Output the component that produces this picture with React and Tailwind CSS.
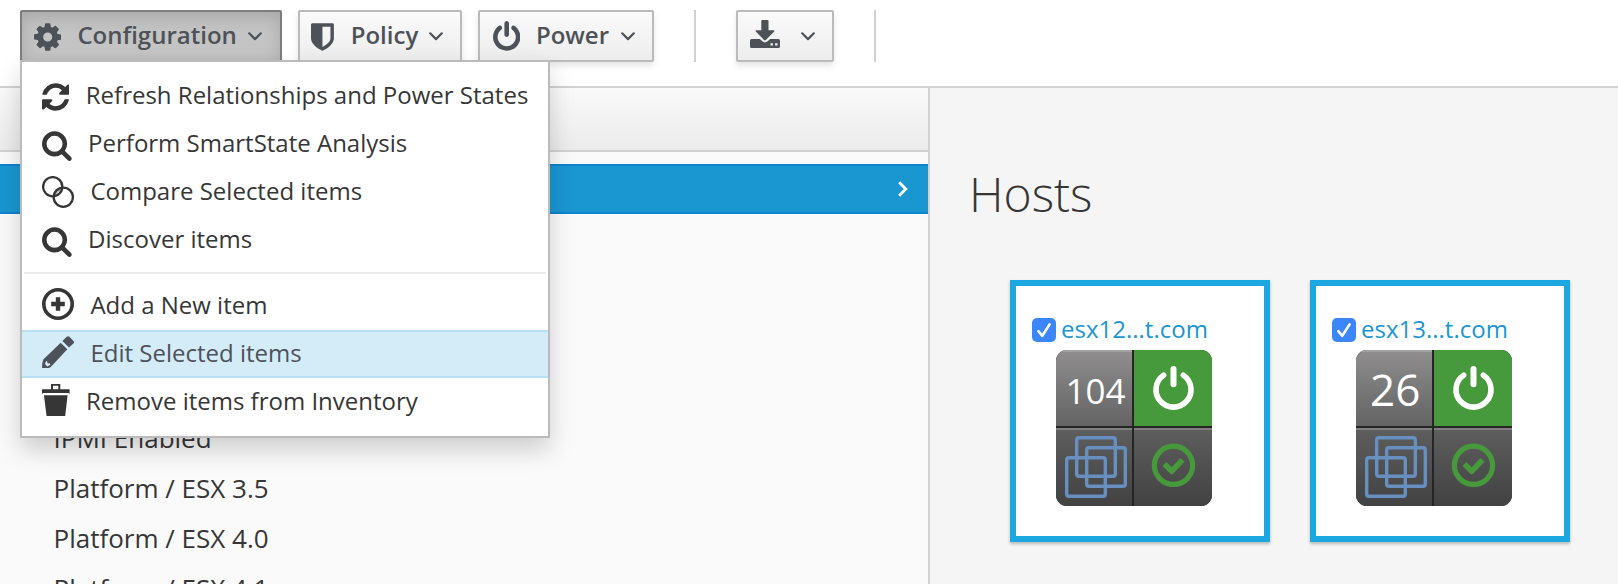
import React from 'react';

const PATHS = {
  cog: 'M1152 896q0-106-75-181t-181-75-181 75-75 181 75 181 181 75 181-75 75-181zm512-109v222q0 12-8 23t-20 13l-185 28q-19 54-39 91 35 50 107 138 10 12 10 25t-9 23q-27 37-99 108t-94 71q-12 0-26-9l-138-108q-44 23-91 38-16 136-29 186-7 28-36 28h-222q-14 0-24.5-8.5t-11.5-21.5l-28-184q-49-16-90-37l-141 107q-10 9-25 9-14 0-25-11-126-114-165-168-7-10-7-23 0-12 8-23 15-21 51-66.5t54-70.5q-27-50-41-99l-183-27q-13-2-21-12.5t-8-23.5v-222q0-12 8-23t19-13l186-28q14-46 39-92-40-57-107-138-10-12-10-24 0-10 9-23 26-36 98.5-107.5t94.5-71.5q13 0 26 10l138 107q44-23 91-38 16-136 29-186 7-28 36-28h222q14 0 24.5 8.5t11.5 21.5l28 184q49 16 90 37l142-107q9-9 24-9 13 0 25 10 129 119 165 170 7 8 7 22 0 12-8 23-15 21-51 66.5t-54 70.5q26 50 41 98l183 28q13 2 21 12.5t8 23.5z',
  shield: 'M1344 960v-640h-448v1137q119-63 213-137 235-184 235-360zm192-768v768q0 86-33.5 170.5t-83 150-118 127.5-126.5 103-121 77.5-89.5 49.5-42.5 20q-12 6-26 6t-26-6q-16-7-42.5-20t-89.5-49.5-121-77.5-126.5-103-118-127.5-83-150-33.5-170.5v-768q0-26 19-45t45-19h1152q26 0 45 19t19 45z',
  power: 'M1664 896q0 156-61 298t-164 245-245 164-298 61-298-61-245-164-164-245-61-298q0-182 80.5-343t226.5-270q43-32 95.5-25t83.5 50q32 42 24.5 94.5t-49.5 84.5q-98 74-151.5 181t-53.5 228q0 104 40.5 198.5t109.5 163.5 163.5 109.5 198.5 40.5 198.5-40.5 163.5-109.5 109.5-163.5 40.5-198.5q0-121-53.5-228t-151.5-181q-42-32-49.5-84.5t24.5-94.5q31-43 84-50t95 25q146 109 226.5 270t80.5 343zm-640-768v640q0 52-38 90t-90 38-90-38-38-90v-640q0-52 38-90t90-38 90 38 38 90z',
  refresh: 'M1639 1056q0 5-1 7-64 268-268 434.5t-478 166.5q-146 0-282.5-55t-243.5-157l-129 129q-19 19-45 19t-45-19-19-45v-448q0-26 19-45t45-19h448q26 0 45 19t19 45-19 45l-137 137q71 66 161 102t187 36q134 0 250-65t186-179q11-17 53-117 8-23 30-23h192q13 0 22.5 9.5t9.5 22.5zm25-800v448q0 26-19 45t-45 19h-448q-26 0-45-19t-19-45 19-45l138-138q-148-137-349-137-134 0-250 65t-186 179q-11 17-53 117-8 23-30 23h-199q-13 0-22.5-9.5t-9.5-22.5v-7q65-268 270-434.5t480-166.5q146 0 284 55.5t245 156.5l130-129q19-19 45-19t45 19 19 45z',
  search: 'M1216 832q0-185-131.5-316.5t-316.5-131.5-316.5 131.5-131.5 316.5 131.5 316.5 316.5 131.5 316.5-131.5 131.5-316.5zm512 832q0 52-38 90t-90 38q-54 0-90-38l-343-342q-179 124-399 124-143 0-273.5-55.5t-225-150-150-225-55.5-273.5 55.5-273.5 150-225 225-150 273.5-55.5 273.5 55.5 225 150 150 225 55.5 273.5q0 220-124 399l343 343q37 37 37 90z',
};

const Cog = () => (
  <svg className="mt-[8.7px] h-8 w-[27.4px] shrink-0" viewBox="128 0 1536 1792" fill="currentColor"><path d={PATHS.cog} /></svg>
);
const Shield = () => (
  <svg className="mt-[8.7px] -ml-[0.7px] h-8 w-[22.9px] shrink-0" viewBox="256 0 1280 1792" fill="currentColor"><path d={PATHS.shield} /></svg>
);
const Power = () => (
  <svg className="mt-[8.7px] ml-[0.5px] h-8 w-[27.4px] shrink-0" viewBox="128 0 1536 1792" fill="currentColor"><path d={PATHS.power} /></svg>
);
const Refresh = () => (
  <svg className="mt-[8.7px] h-8 w-[27.4px] shrink-0" viewBox="128 0 1536 1792" fill="currentColor"><path d={PATHS.refresh} /></svg>
);
const Search = () => (
  <svg className="mt-[8.5px] h-8 w-[29.7px] shrink-0" viewBox="64 0 1664 1792" fill="currentColor"><path d={PATHS.search} /></svg>
);
const Compare = () => (
  <svg className="mt-2 h-8 w-8 shrink-0" viewBox="0 0 32 32" fill="none" stroke="currentColor" strokeWidth="2.3">
    <circle cx="10.7" cy="10.7" r="9.6" />
    <circle cx="21.3" cy="21.2" r="9.6" />
    <path strokeWidth="1" strokeDasharray="1.2 0.6" d="M12.800 18.800L18.800 12.800M13 16.200L16.200 13M15.500 19L19 15.500" />
  </svg>
);
const AddCircle = () => (
  <svg className="mt-1.5 h-8 w-8 shrink-0" viewBox="0 0 32 32" fill="none" stroke="currentColor">
    <circle cx="16" cy="16" r="14.2" strokeWidth="3.6" />
    <path d="M16 9.2v13.6M9.2 16h13.6" strokeWidth="4.4" />
  </svg>
);
const Pencil = () => (
  <svg className="mt-1.5 h-8 w-8 shrink-0" viewBox="0 0 32 32" fill="currentColor">
    <path d="M20.400 5l6.600 6.600 4.400-4q1.200-1.300 0-2.500l-4-4.300q-1.300-1.300-2.600 0z" />
    <path fillRule="evenodd" d="M18.700 6.700L1.300 23.500Q0 26.500 0 32h6.800l2-1L25.300 13.300zM3.700 25.400l1.400-.5.5 2.300 2.400.4.3 1.200-2.900 1.600-2.300-2.200z" />
  </svg>
);
const Trash = () => (
  <svg className="mt-1.5 h-8 w-[27.6px] shrink-0" viewBox="0 0 27.6 32" fill="currentColor">
    <path fillRule="evenodd" d="M9 0h9.3v5.2h9.3v5l-1-1.3H1L0 10.2v-5h9zM11 1.8v3.4h5.3V1.8z" />
    <path d="M2 11.2h23.6L23.2 32H4.6z" />
  </svg>
);
const Download = () => (
  <svg className="mt-2 h-7 w-[30px] shrink-0" viewBox="0 0 30 28" fill="currentColor">
    <path d="M11.3 1q0-1 1-1h5.2q1 0 1 1v9.2h5.2q1.2.2.5 1.2L15.8 20q-.9.8-1.8 0L5.8 11.400q-.7-1 .5-1.200h5z" />
    <path fillRule="evenodd" d="M1.500 19h8.300l2.900 2.600q2.300 1.600 4.600 0l2.900-2.600h8.300q1.500 0 1.500 1.500v6q0 1.500-1.500 1.500h-27Q0 28 0 26.500v-6Q0 19 1.500 19zM20.500 23.200v2.400h2.400v-2.400zM25.100 23.200v2.400h2.400v-2.400z" />
  </svg>
);
const Caret = () => (
  <svg className="mt-5 h-[9px] w-[14px] shrink-0" viewBox="0 0 14 9" fill="none" stroke="currentColor" strokeWidth="2.2" strokeLinecap="round" strokeLinejoin="round">
    <path d="M1.200 1.300L7 7.100l5.800-5.800" />
  </svg>
);

const BTN = 'flex h-[52px] items-start rounded-[2px] border-2 pl-3 text-2xl font-semibold leading-[46px] text-[#4d5258]';
const NORMAL = 'border-[#bbbbbb] bg-linear-to-b from-[#fafafa] to-[#ededed] shadow-[0_4px_6px_rgba(3,3,3,0.1)]';

function MenuItem({ icon, children, active }) {
  return (
    <li
      className={
        'flex h-12 items-start gap-[16.4px] pl-5 text-2xl leading-[46px] whitespace-nowrap ' +
        (active
          ? 'bg-[#d4ebf8] text-[#4d5258] shadow-[inset_0_2px_0_#b9dff2,inset_0_-2px_0_#b9dff2]'
          : 'text-[#363636]')
      }
    >
      {icon}
      <span>{children}</span>
    </li>
  );
}

function Menu() {
  return (
    <ul className="absolute top-[50px] left-0 z-10 h-[378px] w-[530px] rounded-[1px] border-2 border-[#bbbbbb] bg-white py-2.5 shadow-[0_12px_24px_rgba(0,0,0,0.175)]">
      <MenuItem icon={<Refresh />}>Refresh Relationships and Power States</MenuItem>
      <MenuItem icon={<Search />}>Perform SmartState Analysis</MenuItem>
      <MenuItem icon={<Compare />}>Compare Selected items</MenuItem>
      <MenuItem icon={<Search />}>Discover items</MenuItem>
      <li className="mx-0.5 my-2 h-0.5 bg-[#ebebeb]" />
      <MenuItem icon={<AddCircle />}>Add a New item</MenuItem>
      <MenuItem icon={<Pencil />} active>Edit Selected items</MenuItem>
      <MenuItem icon={<Trash />}>Remove items from Inventory</MenuItem>
    </ul>
  );
}

function Toolbar() {
  return (
    <header className="flex h-[88px] items-start border-b-2 border-[#d1d1d1] bg-white pt-2.5 pl-5">
      <div className="relative">
        <button className={BTN + ' w-[262px] border-[#7d7d7d] bg-[#c4c4c4] shadow-[inset_0_6px_16px_rgba(0,0,0,0.14)]'}>
          <Cog />
          <span className="mr-[11px] ml-4">Configuration</span>
          <Caret />
        </button>
        <Menu />
      </div>
      <button className={BTN + ' ml-4 w-[164px] ' + NORMAL}>
        <Shield />
        <span className="mr-[11px] ml-[16.5px]">Policy</span>
        <Caret />
      </button>
      <button className={BTN + ' ml-4 w-44 ' + NORMAL}>
        <Power />
        <span className="mr-[12px] ml-4">Power</span>
        <Caret />
      </button>
      <span className="ml-10 h-[52px] w-0.5 bg-[#d1d1d1]" />
      <button className={BTN + ' ml-10 w-[98px] ' + NORMAL}>
        <Download />
        <span className="w-[21px]" />
        <Caret />
      </button>
      <span className="ml-10 h-[52px] w-0.5 bg-[#d1d1d1]" />
    </header>
  );
}

function FilterRow({ children }) {
  return <li className="h-[50px] pl-[53.5px] text-[26px] leading-[49px] text-[#363636]">{children}</li>;
}

function Sidebar() {
  return (
    <aside className="h-full w-[930px] shrink-0 overflow-hidden border-r-2 border-[#d1d1d1] bg-[#fafafa]">
      <div className="h-16 border-b-2 border-[#d1d1d1] bg-linear-to-b from-[#fafafa] to-[#ebebeb]" />
      <div className="mt-3 flex h-[50px] items-center justify-end border-y-2 border-[#0f83cc] bg-[#1a96d1] pr-[20px]">
        <svg className="h-4 w-2.5" viewBox="0 0 10 16" fill="none" stroke="white" strokeWidth="2.8">
          <path d="M1.200 1.200L7.800 8l-6.600 6.800" />
        </svg>
      </div>
      <ul className="pt-[200px]">
        <FilterRow>IPMI Enabled</FilterRow>
        <FilterRow>Platform / ESX 3.5</FilterRow>
        <FilterRow>Platform / ESX 4.0</FilterRow>
        <FilterRow>Platform / ESX 4.1</FilterRow>
      </ul>
    </aside>
  );
}

const LOWER = 'flex bg-linear-to-b from-[#5e5e5e] to-[#424242] shadow-[inset_0_2px_0_#808080]';

function HostCard({ name, children }) {
  return (
    <div className="h-[262px] w-[260px] border-[6px] border-[#1ca7e0] bg-white pt-8 pl-4 shadow-[0_2px_3px_rgba(3,3,3,0.25)]">
      <div className="flex h-6 gap-[5px]">
        <svg className="h-6 w-6" viewBox="0 0 24 24">
          <rect width="24" height="24" rx="5" fill="#3b86fb" />
          <path d="M6.300 13.200l4 4.600L17.600 6.400" fill="none" stroke="white" strokeWidth="2.600" strokeLinecap="round" strokeLinejoin="round" />
        </svg>
        <span className="text-2xl leading-[21px] text-[#1a96d1]">{name}</span>
      </div>
      <div className="mt-2 ml-6 grid h-[156px] w-[156px] grid-cols-[76px_78px] grid-rows-[76px_78px] gap-0.5 overflow-hidden rounded-[11px] bg-[#252525]">
        <div className="bg-linear-to-b from-[#908e8f] to-[#646464] text-white shadow-[inset_0_2px_0_#a2a2a2]">{children}</div>
        <div className="bg-[#469a3c]">
          <svg className="h-[76px] w-[78px]" viewBox="0 0 78 76" fill="none" stroke="white" strokeLinecap="round">
            <path strokeWidth="5.600" d="M29.600 25.200a17.500 17.500 0 1 0 19.800 0" />
            <path strokeWidth="6" d="M39.500 19v15.300" />
          </svg>
        </div>
        <div className={LOWER}>
          <svg className="h-[78px] w-[76px]" viewBox="0 0 76 78" fill="none" stroke="#678fc0" strokeWidth="3.400">
            <rect x="20.700" y="9.700" width="38.600" height="38.600" rx="2.200" />
            <rect x="30.700" y="19.700" width="38.600" height="38.600" rx="2.200" />
            <rect x="10.700" y="29.700" width="38.600" height="38.600" rx="2.200" />
          </svg>
        </div>
        <div className={LOWER}>
          <svg className="h-[78px] w-[78px]" viewBox="0 0 78 78" fill="none" stroke="#469a3c">
            <circle cx="39.500" cy="37.300" r="19.100" strokeWidth="5.200" />
            <path strokeWidth="5.600" strokeLinejoin="round" d="M30.500 35.900l7.300 7.300L48.500 31.800" />
          </svg>
        </div>
      </div>
    </div>
  );
}

export default function App() {
  return (
    <div className="flex h-[584px] w-[1618px] flex-col overflow-hidden font-['Open_Sans',sans-serif]">
      <Toolbar />
      <div className="flex min-h-0 flex-1">
        <Sidebar />
        <main className="flex-1 bg-[#f5f5f5] pt-[74px] pl-10">
          <h1 className="-ml-px h-[66px] text-[48px] leading-[64px] font-light text-[#363636]">Hosts</h1>
          <div className="mt-[52px] ml-10 flex gap-10">
            <HostCard name="esx12...t.com">
              <div className="pl-[9.5px] text-[35px] leading-[82px]">104</div>
            </HostCard>
            <HostCard name="esx13...t.com">
              <div className="pl-[14px] text-[44px] leading-[78px]">26</div>
            </HostCard>
          </div>
        </main>
      </div>
    </div>
  );
}
